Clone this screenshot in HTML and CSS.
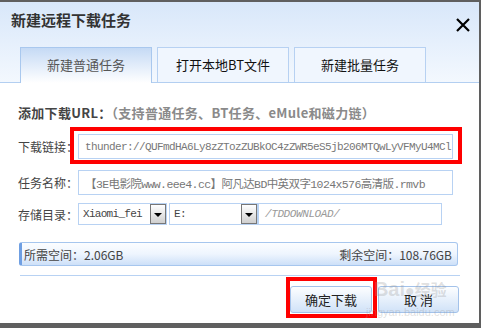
FILE: index.html
```html
<!DOCTYPE html>
<html lang="zh-CN">
<head>
  <meta charset="UTF-8">
  <title>新建远程下载任务</title>
  <link rel="stylesheet" href="styles.css">
</head>
<body>

  <div class="dialog">
    <!-- cabecera con pestañas -->
    <div class="header">
      <div class="title-row">
        <h1 class="title">新建远程下载任务</h1>
        <span class="close">
          <svg width="14" height="14" viewBox="0 0 14 14"><path d="M1 1 L13 13 M13 1 L1 13" stroke="#000" stroke-width="2.2" fill="none"/></svg>
        </span>
      </div>
      <div class="tabs">
        <div class="tab active">新建普通任务</div>
        <div class="tab">打开本地BT文件</div>
        <div class="tab">新建批量任务</div>
      </div>
    </div>

    <div class="content">
      <div class="heading"><span class="heading-main">添加下载URL：</span><span class="heading-hint">（支持普通任务、BT任务、eMule和磁力链）</span></div>

      <div class="row row-link">
        <label class="label">下载链接：</label>
        <div class="field">thunder://QUFmdHA6Ly8zZTozZUBkOC4zZWR5eS5jb206MTQwLyVFMyU4MCl</div>
      </div>

      <div class="row row-name">
        <label class="label">任务名称：</label>
        <div class="field">【3E电影院www.eee4.cc】阿凡达BD中英双字1024x576高清版.rmvb</div>
      </div>

      <div class="row row-dir">
        <label class="label">存储目录：</label>
        <div class="select sel-user"><span>Xiaomi_fei</span><span class="arrow"></span></div>
        <div class="select sel-drive"><span>E:</span><span class="arrow"></span></div>
        <div class="field path">/TDDOWNLOAD/</div>
      </div>

      <div class="space-bar">
        <span>所需空间：2.06GB</span>
        <span>剩余空间：108.76GB</span>
      </div>

      <div class="divider"></div>

      <div class="buttons">
        <button class="btn btn-ok">确定下载</button>
        <button class="btn btn-cancel">取 消</button>
      </div>
    </div>
  </div>

  <!-- marcas rojas -->
  <div class="mark mark-link"></div>
  <div class="mark mark-ok"></div>

  <!-- marca de agua -->
  <div class="watermark">
    <div class="wm-top">Bai<span class="wm-paw">●</span><span class="wm-cn">经验</span></div>
    <div class="wm-url">jingyan.baidu.com</div>
  </div>

</body>
</html>
```

FILE: styles.css
```css
body {
  margin: 0;
  width: 481px;
  height: 328px;
  overflow: hidden;
  position: relative;
  background-color: #5f5f5f;
  font-family: "Noto Sans CJK SC", "Liberation Sans", sans-serif;
  color: #333;
}

.dialog {
  margin: 2px 2px 0 0;
  height: 321px;
  background-color: #fff;
}

.header {
  height: 80px;
  display: flex;
  flex-direction: column;
  background: linear-gradient(#d8e7fa, #f3f8fe);
  border-bottom: 1px solid #b3cff1;
}

.title-row {
  height: 45px;
  display: flex;
  justify-content: space-between;
  padding: 8px 9px 0 11px;
  box-sizing: border-box;
}

.title {
  margin: 0;
  font-size: 15px;
  line-height: 20px;
  font-weight: bold;
  color: #333;
}

.close {
  padding-top: 3px;
}

.tabs {
  display: flex;
  gap: 5px;
  padding-left: 20px;
  height: 35px;
}

.tab {
  width: 132px;
  height: 35px;
  box-sizing: border-box;
  border: 1px solid #b7d1f2;
  border-bottom: none;
  background-color: #f0f6fe;
  text-align: center;
  line-height: 34px;
  font-size: 13px;
  color: #111;
}

.tab.active {
  height: 36px;
  margin-bottom: -1px;
  background: linear-gradient(#c5daf5, #ffffff);
  border-color: #a9c8ee;
  color: #555;
}

.content {
  padding: 0 18px;
}

.heading {
  margin-top: 22px;
  font-size: 13px;
  line-height: 16px;
  font-weight: bold;
  white-space: nowrap;
  letter-spacing: 0.3px;
}

.heading-main {
  color: #444;
}

.heading-hint {
  color: #8a8a8a;
}

.row {
  display: flex;
  align-items: center;
}

.row > * {
  flex-shrink: 0;
}

.row-link {
  margin-top: 13px;
  height: 25px;
}

.row-name {
  margin-top: 11px;
  height: 25px;
}

.row-dir {
  margin-top: 8px;
  height: 22px;
}

.label {
  width: 60px;
  font-size: 12px;
  white-space: nowrap;
  color: #444;
}

.field {
  width: 375px;
  height: 100%;
  box-sizing: border-box;
  border: 1px solid #b8d2f3;
  padding: 0 6px;
  font-family: "Liberation Mono", "Noto Sans CJK SC", monospace;
  font-size: 11px;
  letter-spacing: -0.6px;
  color: #777;
  display: flex;
  align-items: center;
  white-space: nowrap;
  overflow: hidden;
}

.row-name .field {
  letter-spacing: -0.6px;
  font-size: 11.5px;
}

.select {
  height: 22px;
  box-sizing: border-box;
  border: 1px solid #b8d2f3;
  display: flex;
  align-items: center;
  justify-content: space-between;
  padding-left: 4px;
  font-family: "Liberation Mono", monospace;
  font-size: 11px;
  letter-spacing: -0.7px;
  color: #444;
}

.sel-user {
  width: 89px;
  margin-right: 2px;
}

.sel-drive {
  width: 89px;
}

.arrow {
  width: 16px;
  height: 20px;
  box-sizing: border-box;
  border: 1px solid #777;
  background: linear-gradient(#ffffff, #cfcfcf);
  position: relative;
}

.arrow::after {
  content: "";
  position: absolute;
  left: 3px;
  top: 8px;
  border-left: 4px solid transparent;
  border-right: 4px solid transparent;
  border-top: 4px solid #000;
}

.field.path {
  width: 184px;
  font-style: italic;
  color: #999;
  letter-spacing: -0.4px;
}

.space-bar {
  margin: 17px 3px 0 1px;
  height: 24px;
  box-sizing: border-box;
  display: flex;
  justify-content: space-between;
  align-items: center;
  padding: 0 5px 0 2px;
  background: linear-gradient(#fbfdff 0%, #eef5fe 50%, #cde0f8 100%);
  border: 1px solid #a6c6ee;
  border-left: 3px solid #6f9fe2;
  border-radius: 3px;
  font-size: 12px;
  color: #444;
}

.divider {
  margin: 9px 1px 0 2px;
  height: 1px;
  background-color: #b8d2f3;
}

.buttons {
  display: flex;
  justify-content: flex-end;
  gap: 6px;
  margin-top: 10px;
  padding-right: 2px;
}

.btn {
  height: 27px;
  box-sizing: border-box;
  border: 1px solid #a3c2ea;
  border-radius: 3px;
  background: linear-gradient(#fdfeff, #d0e2f8);
  font-family: "Noto Sans CJK SC", sans-serif;
  font-size: 13px;
  color: #222;
  padding: 0;
}

.btn-ok {
  width: 82px;
}

.btn-cancel {
  width: 81px;
}

.mark {
  position: absolute;
  border: 4px solid #f00;
  box-sizing: border-box;
}

.mark-link {
  left: 70px;
  top: 127px;
  width: 392px;
  height: 37px;
}

.mark-ok {
  left: 286px;
  top: 277px;
  width: 91px;
  height: 41px;
}

.watermark {
  position: absolute;
  left: 366px;
  top: 277px;
  color: rgba(150, 150, 150, 0.3);
  font-family: "Liberation Sans", sans-serif;
  text-align: center;
}

.wm-top {
  font-size: 20px;
  font-weight: bold;
  line-height: 24px;
  white-space: nowrap;
}

.wm-paw {
  font-size: 16px;
}

.wm-cn {
  font-family: "Noto Sans CJK SC", sans-serif;
  font-size: 16px;
}

.wm-url {
  font-size: 11px;
  line-height: 14px;
  margin-top: 2px;
}
```
